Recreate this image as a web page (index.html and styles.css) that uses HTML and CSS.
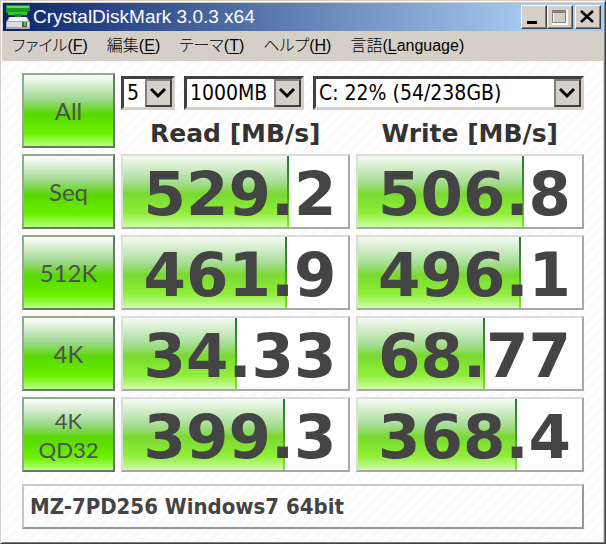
FILE: index.html
```
<!DOCTYPE html>
<html lang="ja">

<head>
    <meta charset="UTF-8">
    <meta name="viewport" content="width=device-width, initial-scale=1.0">
    <title>CrystalDiskMark 3.0.3 x64</title>
    <link rel="stylesheet" href="styles.css">
</head>

<body>
    <div class="window">
        <header class="titlebar">
            <svg class="logo" width="24" height="24" viewBox="0 0 24 24">
                <path d="M0 0h24v6h-2v2H0z" fill="#1d9a1d" />
                <path d="M1 1h22v2H1z" fill="#5fe04e" />
                <path d="M2 7h19v3H2z" fill="#39c22f" />
                <path d="M9 9h6v5H9z" fill="#1f8f22" />
                <path d="M3 12h18l3 5v7H0v-7z" fill="#a9a9b4" />
                <path d="M4 12h16l2 4H2z" fill="#f4f4f7" />
                <path d="M1 17h22v5H1z" fill="#dcdce4" />
                <path d="M16 17h5v5h-5z" fill="#4b5a4b" />
                <path d="M18 17h2v4h-2z" fill="#37d837" />
            </svg>
            <h1>CrystalDiskMark 3.0.3 x64</h1>
            <div class="controls">
                <button type="button" aria-label="最小化">
                    <svg width="22" height="20" viewBox="0 0 22 20"><path d="M5 15h10v3H5z" /></svg>
                </button>
                <button type="button" aria-label="最大化" disabled>
                    <svg width="22" height="20" viewBox="0 0 22 20">
                        <path d="M5 5h14v13H5z" fill="none" stroke="#fff" stroke-width="2" />
                        <path d="M4.500 5.500h13v11h-13z" fill="none" stroke="#808080" />
                        <path d="M4 4h14v3H4z" fill="#808080" />
                    </svg>
                </button>
                <button type="button" class="close" aria-label="閉じる">
                    <svg width="22" height="20" viewBox="0 0 22 20">
                        <path d="M5 5l12 11M17 5L5 16" stroke="#000" stroke-width="2.500" />
                    </svg>
                </button>
            </div>
        </header>

        <nav class="menu">
            <button type="button">ファイル(<u>F</u>)</button>
            <button type="button">編集(<u>E</u>)</button>
            <button type="button">テーマ(<u>T</u>)</button>
            <button type="button">ヘルプ(<u>H</u>)</button>
            <button type="button">言語(<u>L</u>anguage)</button>
        </nav>

        <main class="client">
            <div class="bench">
                <button type="button" class="run">All</button>
                <div class="head">
                    <div class="options">
                        <div class="combo count">
                            <select aria-label="回数">
                                <option>5</option>
                            </select>
                            <span class="arrow"><svg width="17" height="12" viewBox="0 0 17 12"><path d="M1 2l7 7 7-7" /></svg></span>
                        </div>
                        <div class="combo size">
                            <select aria-label="サイズ">
                                <option>1000MB</option>
                            </select>
                            <span class="arrow"><svg width="17" height="12" viewBox="0 0 17 12"><path d="M1 2l7 7 7-7" /></svg></span>
                        </div>
                        <div class="combo drive">
                            <select aria-label="ドライブ">
                                <option>C: 22% (54/238GB)</option>
                            </select>
                            <span class="arrow"><svg width="17" height="12" viewBox="0 0 17 12"><path d="M1 2l7 7 7-7" /></svg></span>
                        </div>
                    </div>
                    <div class="titles">
                        <h2>Read [MB/s]</h2>
                        <h2>Write [MB/s]</h2>
                    </div>
                </div>

                <button type="button" class="run">Seq</button>
                <div class="meter"><div class="bar" style="width:74%"></div><span>529.2</span></div>
                <div class="meter"><div class="bar" style="width:74%"></div><span>506.8</span></div>

                <button type="button" class="run">512K</button>
                <div class="meter"><div class="bar" style="width:73%"></div><span>461.9</span></div>
                <div class="meter"><div class="bar" style="width:73%"></div><span>496.1</span></div>

                <button type="button" class="run">4K</button>
                <div class="meter"><div class="bar" style="width:51%"></div><span>34.33</span></div>
                <div class="meter"><div class="bar" style="width:57%"></div><span>68.77</span></div>

                <button type="button" class="run two-line">4K<br>QD32</button>
                <div class="meter"><div class="bar" style="width:72%"></div><span>399.3</span></div>
                <div class="meter"><div class="bar" style="width:71%"></div><span>368.4</span></div>
            </div>

            <input class="comment" type="text" aria-label="コメント" value="MZ-7PD256 Windows7 64bit">
        </main>
    </div>
</body>

</html>
```
FILE: styles.css
```
* {
    box-sizing: border-box;
}

html,
body {
    margin: 0;
    padding: 0;
}

button,
select,
input {
    margin: 0;
    padding: 0;
    border-radius: 0;
    appearance: none;
}

.window {
    display: flex;
    flex-direction: column;
    min-height: 100vh;
    padding: 1px;
    background: #d4d0c8;
    border: 1px solid;
    border-color: #d4d0c8 #404040 #404040 #d4d0c8;
    box-shadow: inset 1px 1px #fff, inset -1px -1px #808080;
}

/* title bar */
.titlebar {
    display: flex;
    align-items: center;
    height: 28px;
    margin: 1px 1px 0;
    padding: 0 2px 0 3px;
    background: linear-gradient(to right, #0a246a, #a6caf0 88%);
}

.titlebar h1 {
    flex: 1;
    margin: 0 0 0 3px;
    color: #fff;
    font: 19px/28px "Liberation Sans", "Noto Sans CJK JP", sans-serif;
}

.controls {
    display: flex;
}

.controls button {
    display: flex;
    width: 26px;
    height: 24px;
    padding: 0;
    background: #d4d0c8;
    border: 1px solid;
    border-color: #fff #404040 #404040 #fff;
    box-shadow: inset -1px -1px #808080;
}

.controls .close {
    margin-left: 2px;
}

/* menu */
.menu {
    display: flex;
    gap: 19px;
    height: 29px;
    padding: 0 10px;
}

.menu button {
    background: none;
    border: 0;
    color: #000;
    font: 300 16px/28px "Liberation Sans", "Noto Sans CJK JP", sans-serif;
    font-feature-settings: "palt";
    white-space: nowrap;
}

.menu u {
    text-underline-offset: 2px;
}

/* client area */
.client {
    flex: 1;
    padding: 12px 19px 12px 20px;
    background: repeating-linear-gradient(135deg, #fff 0 4px, #fbfbfb 4px 8px);
    border: 1px solid #d4d0c8;
    border-width: 1px 1px 0 0;
}

.bench {
    display: grid;
    grid-template-columns: 93px 1fr 1fr;
    grid-auto-rows: 75px;
    gap: 6px;
}

.run {
    background: linear-gradient(#fff, #a0d890 34%, #58d800 55%, #6af000 82%, #b8ff80);
    border: 2px solid;
    border-color: #94a894 #64786a #64786a #94a894;
    color: #505050;
    font: 24px/29px "Comic Sans MS", Lato, sans-serif;
}

.two-line {
    font-size: 22px;
}

.head {
    grid-column: span 2;
    padding-top: 3px;
}

.options {
    display: flex;
    gap: 9px;
}

.combo {
    position: relative;
    height: 34px;
    background: #fff;
    border: 3px solid;
    border-color: #404040 #d4d0c8 #d4d0c8 #404040;
}

.count {
    width: 54px;
}

.size {
    width: 120px;
}

.drive {
    flex: 1;
}

.combo select {
    display: block;
    width: 100%;
    height: 28px;
    padding: 0 27px 0 3px;
    background: #fff;
    border: 0;
    color: #000;
    font: 21px/28px "DejaVu Sans Condensed", "DejaVu Sans", sans-serif;
}

.arrow {
    position: absolute;
    top: 0;
    right: 0;
    display: flex;
    align-items: center;
    justify-content: center;
    width: 27px;
    height: 28px;
    background: #d4d0c8;
    border: 2px solid;
    border-color: #808080 #404040 #404040 #808080;
    pointer-events: none;
}

.arrow path {
    fill: none;
    stroke: #000;
    stroke-width: 3;
}

.titles {
    display: grid;
    grid-template-columns: 1fr 1fr;
    gap: 6px;
}

.titles h2 {
    margin: 0;
    color: #333;
    font: bold 25px/48px "DejaVu Sans", sans-serif;
    text-align: center;
    white-space: nowrap;
}

/* result meters */
.meter {
    display: grid;
    grid-template-rows: 71px;
    background: #fff;
    border: 2px solid;
    border-color: #dcdcdc #a8a8a8 #a8a8a8 #dcdcdc;
}

.meter > * {
    grid-area: 1 / 1;
}

.bar {
    background:
        linear-gradient(#2a7a3a, #3c9c28 50%, #7cec20) right / 2px 100% no-repeat,
        linear-gradient(#f6faf6, #a4dc90 38%, #7ad932 53%, #8eee36 80%, #d0fca8);
}

.meter span {
    padding-right: 11px;
    color: #444;
    font: bold 61px/75px "DejaVu Sans", sans-serif;
    text-align: right;
}

.comment {
    display: block;
    width: 100%;
    height: 45px;
    margin-top: 12px;
    padding: 0 6px;
    background: none;
    border: 2px solid;
    border-color: #c8c8c8 #989898 #989898 #c8c8c8;
    color: #444;
    font: bold 22px "DejaVu Sans Condensed", "DejaVu Sans", sans-serif;
}
```
